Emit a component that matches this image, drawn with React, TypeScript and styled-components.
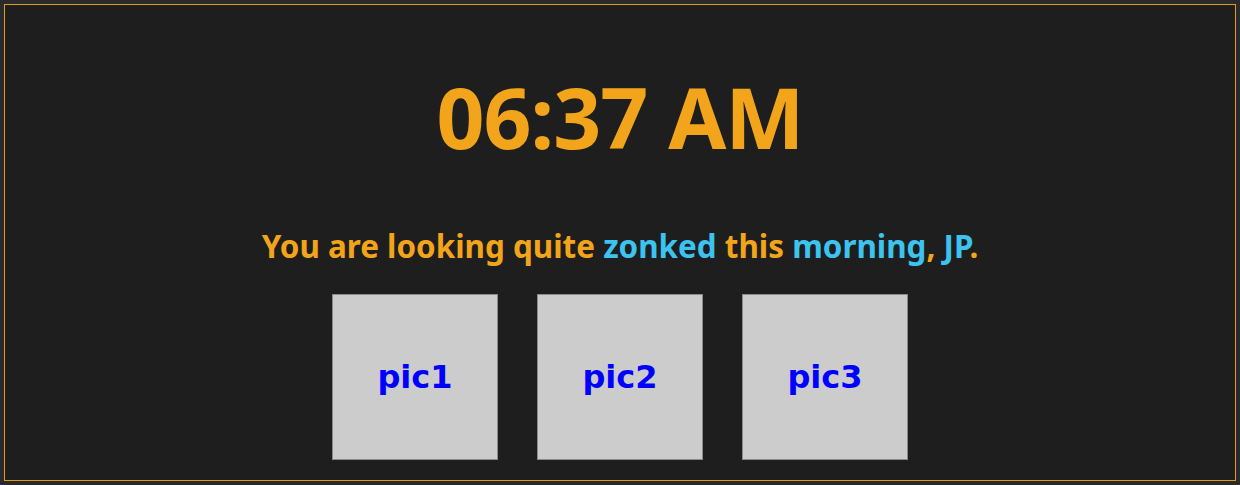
import React from "react";
import styled, { createGlobalStyle } from "styled-components";

const GlobalStyle = createGlobalStyle`
  html, body {
    margin: 0;
    padding: 0;
    background: #2a2a2a;
  }
  body {
    padding: 4px;
    font-family: "Noto Sans", "Open Sans", sans-serif;
  }
`;

// Outer framed panel
const Frame = styled.div`
  box-sizing: border-box;
  height: 477px;
  border: 1px solid #e39a1c;
  background-color: #1e1e1e;
  display: flex;
  flex-direction: column;
  align-items: center;
`;

const Clock = styled.h1`
  margin: 62px 0 0;
  font-size: 84px;
  line-height: 100px;
  font-weight: 700;
  letter-spacing: -1px;
  color: #f2a51a;
`;

const Greeting = styled.p`
  margin: 59px 0 0;
  font-size: 31.4px;
  line-height: 40px;
  font-weight: 700;
  color: #f2a51a;
`;

const Mood = styled.span`
  color: #3cc3ef;
`;

const Pics = styled.div`
  margin-top: 28px;
  display: flex;
  gap: 39px;
`;

const Pic = styled.div`
  box-sizing: border-box;
  width: 166px;
  height: 166px;
  background-color: #cccccc;
  border: 1px solid #8a8a8a;
  display: flex;
  align-items: center;
  justify-content: center;
  font-family: "DejaVu Sans", sans-serif;
  font-weight: 700;
  font-size: 32px;
  color: #0000ff;
`;

const App = () => {
  const pics = ["pic1", "pic2", "pic3"];
  return (
    <>
      <GlobalStyle />
      <Frame>
        <Clock>06:37 AM</Clock>
        <Greeting>
          You are looking quite <Mood>zonked</Mood> this <Mood>morning</Mood>,{" "}
          <Mood>JP</Mood>.
        </Greeting>
        <Pics>
          {pics.map((p) => (
            <Pic key={p}>{p}</Pic>
          ))}
        </Pics>
      </Frame>
    </>
  );
};

export default App;
